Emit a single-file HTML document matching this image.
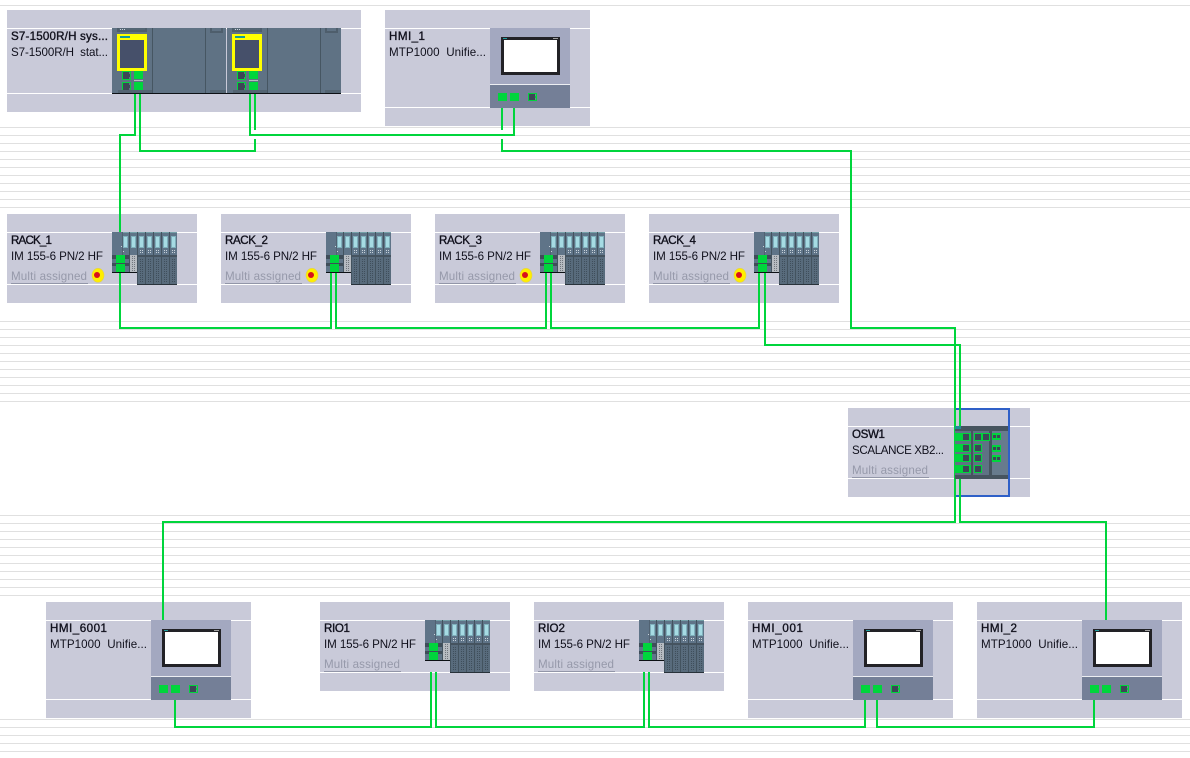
<!DOCTYPE html>
<html>
<head>
<meta charset="utf-8">
<style>
html,body{margin:0;padding:0;background:#fff;width:1190px;height:758px;overflow:hidden}
svg{display:block}
text{font-family:"Liberation Sans",sans-serif;font-size:11.6px;fill:#10101c}
.b{stroke:#10101c;stroke-width:.35px}
.g{fill:#9699aa}
</style>
</head>
<body>
<svg width="1190" height="758" viewBox="0 0 1190 758" xmlns="http://www.w3.org/2000/svg" shape-rendering="crispEdges">
<defs>
<pattern id="dl" width="2" height="2" patternUnits="userSpaceOnUse"><rect width="1" height="1" fill="#70757c"/></pattern>

<g id="rj"><rect x="0" y="0" width="9" height="9" fill="#00d53c"/><rect x="1" y="1" width="7" height="7" fill="#3d4656"/><rect x="7" y="1" width="1" height="2" fill="#5f7284"/><rect x="7" y="6" width="1" height="2" fill="#5f7284"/></g>

<g id="card">
<rect width="8" height="53" fill="#5f7488"/>
<rect x="0" y="0" width="1" height="53" fill="#43535f"/>
<rect x="1" y="0" width="7" height="1" fill="#74a0a8"/>
<rect x="2" y="4" width="5" height="12" fill="#7fb0bc"/>
<rect x="3" y="5" width="3" height="10" fill="#a6dbe4"/>
<rect x="3" y="18" width="1" height="1" fill="#c8d2da"/><rect x="5" y="18" width="1" height="1" fill="#c8d2da"/>
<rect x="3" y="20" width="1" height="1" fill="#c8d2da"/><rect x="5" y="20" width="1" height="1" fill="#c8d2da"/>
<rect x="1" y="23" width="7" height="29" fill="#586b7c"/>
<rect x="1" y="23" width="7" height="2" fill="#45535f"/>
<path d="M3.5 27V50M5.5 27V50" stroke="#3f4e5b" stroke-width="1" stroke-dasharray="1 1" fill="none"/>
<rect y="52" width="8" height="1" fill="#28323a"/>
</g>

<g id="rack">
<rect x="0" y="0" width="25" height="41" fill="#5f7488"/>
<rect x="10" y="0" width="1" height="23" fill="#516272"/>
<rect x="17" y="0" width="1" height="41" fill="#43535f"/>
<rect x="11" y="0" width="6" height="1" fill="#74a0a8"/>
<rect x="11" y="4" width="5" height="12" fill="#7fb0bc"/>
<rect x="12" y="5" width="3" height="10" fill="#a6dbe4"/>
<rect x="11" y="19" width="1" height="1" fill="#c8d2da"/>
<rect x="9" y="14" width="1" height="1" fill="#c8d2da"/>
<rect x="0" y="23" width="17" height="4" fill="#3f4d59"/>
<rect x="0" y="31" width="17" height="3" fill="#3f4d59"/>
<rect x="18" y="0" width="7" height="1" fill="#74a0a8"/>
<rect x="19" y="4" width="5" height="12" fill="#7fb0bc"/>
<rect x="20" y="5" width="3" height="10" fill="#a6dbe4"/>
<rect x="18" y="23" width="7" height="17" fill="#b6bbc1"/>
<rect x="19" y="24" width="5" height="15" fill="url(#dl)"/>
<rect x="0" y="40" width="25" height="1" fill="#0c1014"/>
<use href="#card" x="25"/><use href="#card" x="33"/><use href="#card" x="41"/><use href="#card" x="49"/><use href="#card" x="57"/>
<rect x="4" y="23" width="9" height="8" fill="#00d53c"/>
<rect x="4" y="32" width="9" height="8" fill="#00d53c"/>
</g>

<g id="hmi">
<rect width="80" height="80" fill="#a3a8c0"/>
<rect y="56" width="80" height="1" fill="#eceef2"/>
<rect y="57" width="80" height="23" fill="#747f97"/>
<rect x="11" y="9" width="59" height="38" fill="#222226"/>
<rect x="14" y="12" width="53" height="32" fill="#fff"/>
<rect x="13" y="10" width="4" height="1" fill="#1f9c9c"/>
<rect x="63" y="10" width="5" height="1" fill="#a0a0a0"/>
<rect x="8" y="65" width="9" height="8" fill="#00d53c"/>
<rect x="20" y="65" width="9" height="8" fill="#00d53c"/>
<rect x="38" y="65" width="9" height="8" fill="#00d53c"/>
<rect x="39" y="66" width="6" height="6" fill="#3d4656"/>
<rect x="45" y="66" width="1" height="2" fill="#747f97"/>
<rect x="45" y="70" width="1" height="2" fill="#747f97"/>
</g>

<g id="cpu">
<rect width="114" height="65" fill="#5f7284"/>
<rect x="5" y="0" width="30" height="4" fill="#4e5e6c"/>
<rect x="7" y="0" width="26" height="2" fill="#5f7284" opacity=".4"/>
<rect x="8" y="1" width="1" height="1" fill="#c8d2da"/><rect x="10" y="1" width="1" height="1" fill="#c8d2da"/><rect x="12" y="1" width="1" height="1" fill="#c8d2da"/>
<rect x="40" y="0" width="1" height="65" fill="#465662"/>
<rect x="93" y="0" width="1" height="65" fill="#465662"/>
<rect x="98" y="0" width="13" height="5" fill="#4e5e6c"/>
<rect x="100" y="0" width="9" height="3" fill="#5f7284"/>
<rect x="5" y="6" width="30" height="37" fill="#ffff00"/>
<rect x="8" y="12" width="24" height="28" fill="#46506a"/>
<rect x="8" y="8" width="10" height="2" fill="#129a9a"/>
<use href="#rj" x="10" y="43"/>
<use href="#rj" x="10" y="54"/>
<rect x="22" y="43" width="9" height="8" fill="#00d53c"/>
<rect x="22" y="52" width="9" height="1" fill="#b8bcc2"/>
<rect x="22" y="54" width="9" height="8" fill="#00d53c"/>
<rect x="6" y="62" width="34" height="3" fill="#536472"/>
<rect x="98" y="62" width="16" height="3" fill="#536472"/>
</g>

<g id="warn" shape-rendering="geometricPrecision">
<ellipse cx="1" cy="0.3" rx="6" ry="7" fill="#ffee00" stroke="#e0d050" stroke-width="0.6"/>
<circle cx="0" cy="0" r="3" fill="#d8101c"/>
</g>
</defs>

<!-- grid lines -->
<rect x="0" y="5" width="1190" height="1" fill="#e0e0e0"/>
<g fill="#e0e0e0">
<rect x="0" y="127" width="1190" height="1"/><rect x="0" y="135" width="1190" height="1"/><rect x="0" y="143" width="1190" height="1"/><rect x="0" y="151" width="1190" height="1"/><rect x="0" y="159" width="1190" height="1"/><rect x="0" y="167" width="1190" height="1"/><rect x="0" y="175" width="1190" height="1"/><rect x="0" y="183" width="1190" height="1"/><rect x="0" y="191" width="1190" height="1"/><rect x="0" y="199" width="1190" height="1"/><rect x="0" y="207" width="1190" height="1"/>
<rect x="0" y="321" width="1190" height="1"/><rect x="0" y="329" width="1190" height="1"/><rect x="0" y="337" width="1190" height="1"/><rect x="0" y="345" width="1190" height="1"/><rect x="0" y="353" width="1190" height="1"/><rect x="0" y="361" width="1190" height="1"/><rect x="0" y="369" width="1190" height="1"/><rect x="0" y="377" width="1190" height="1"/><rect x="0" y="385" width="1190" height="1"/><rect x="0" y="393" width="1190" height="1"/><rect x="0" y="401" width="1190" height="1"/>
<rect x="0" y="515" width="1190" height="1"/><rect x="0" y="523" width="1190" height="1"/><rect x="0" y="531" width="1190" height="1"/><rect x="0" y="539" width="1190" height="1"/><rect x="0" y="547" width="1190" height="1"/><rect x="0" y="555" width="1190" height="1"/><rect x="0" y="563" width="1190" height="1"/><rect x="0" y="571" width="1190" height="1"/><rect x="0" y="579" width="1190" height="1"/><rect x="0" y="587" width="1190" height="1"/><rect x="0" y="595" width="1190" height="1"/>
<rect x="0" y="719" width="1190" height="1"/><rect x="0" y="727" width="1190" height="1"/><rect x="0" y="735" width="1190" height="1"/><rect x="0" y="743" width="1190" height="1"/><rect x="0" y="751" width="1190" height="1"/>
</g>

<!-- station boxes -->
<g fill="#c9cad9">
<rect x="7" y="10" width="354" height="102"/>
<rect x="385" y="10" width="205" height="116"/>
<rect x="7" y="214" width="190" height="89"/><rect x="221" y="214" width="190" height="89"/><rect x="435" y="214" width="190" height="89"/><rect x="649" y="214" width="190" height="89"/>
<rect x="848" y="408" width="182" height="89"/>
<rect x="46" y="602" width="205" height="116"/>
<rect x="320" y="602" width="190" height="89"/><rect x="534" y="602" width="190" height="89"/>
<rect x="748" y="602" width="205" height="116"/><rect x="977" y="602" width="205" height="116"/>
</g>
<g fill="#fff">
<rect x="7" y="28" width="354" height="1"/><rect x="7" y="93" width="354" height="1"/>
<rect x="385" y="28" width="205" height="1"/><rect x="385" y="107" width="205" height="1"/>
<rect x="7" y="232" width="190" height="1"/><rect x="7" y="284" width="190" height="1"/>
<rect x="221" y="232" width="190" height="1"/><rect x="221" y="284" width="190" height="1"/>
<rect x="435" y="232" width="190" height="1"/><rect x="435" y="284" width="190" height="1"/>
<rect x="649" y="232" width="190" height="1"/><rect x="649" y="284" width="190" height="1"/>
<rect x="848" y="426" width="182" height="1"/><rect x="848" y="478" width="182" height="1"/>
<rect x="46" y="620" width="205" height="1"/><rect x="46" y="699" width="205" height="1"/>
<rect x="320" y="620" width="190" height="1"/><rect x="320" y="672" width="190" height="1"/>
<rect x="534" y="620" width="190" height="1"/><rect x="534" y="672" width="190" height="1"/>
<rect x="748" y="620" width="205" height="1"/><rect x="748" y="699" width="205" height="1"/>
<rect x="977" y="620" width="205" height="1"/><rect x="977" y="699" width="205" height="1"/>
</g>

<!-- switch frame -->
<rect x="955" y="409" width="54" height="87" fill="none" stroke="#2f60c8" stroke-width="2"/>

<!-- wires -->
<g fill="none" stroke="#00d53c" stroke-width="2">
<path d="M135 94V135H120V328H331V270"/>
<path d="M140 94V151H255V139"/>
<path d="M255 94V130"/>
<path d="M250 94V135H514V108"/>
<path d="M502 108V130"/>
<path d="M502 139V151H851V328H955V522H163V620"/>
<path d="M336 270V328H546V270"/>
<path d="M551 270V328H759V270"/>
<path d="M765 270V345H960V522H1106V620"/>
<path d="M175 700V727H431V672"/>
<path d="M436 672V727H644V672"/>
<path d="M649 672V727H865V700"/>
<path d="M877 700V727H1094V700"/>
</g>

<!-- devices -->
<use href="#cpu" x="112" y="28"/>
<use href="#cpu" x="227" y="28"/>
<rect x="112" y="93" width="229" height="1" fill="#0c1014"/>
<use href="#hmi" x="490" y="28"/>
<use href="#rack" x="112" y="232"/><use href="#rack" x="326" y="232"/><use href="#rack" x="540" y="232"/><use href="#rack" x="754" y="232"/>
<use href="#rack" x="425" y="620"/><use href="#rack" x="639" y="620"/>
<use href="#hmi" x="151" y="620"/><use href="#hmi" x="853" y="620"/><use href="#hmi" x="1082" y="620"/>

<!-- switch body -->
<rect x="955" y="426" width="53" height="53" fill="#5f7284"/>
<rect x="955" y="426" width="53" height="5" fill="#46545f"/>
<rect x="955" y="475" width="53" height="4" fill="#46545f"/>
<rect x="955" y="426" width="6" height="3" fill="#1f8f94"/>
<rect x="971" y="431" width="2" height="44" fill="#46545f"/>
<rect x="989" y="431" width="3" height="44" fill="#46545f"/>
<rect x="992" y="431" width="16" height="44" fill="#677b8d"/>
<g fill="#00d53c">
<rect x="955" y="433" width="16" height="8"/><rect x="955" y="444" width="16" height="8"/><rect x="955" y="454" width="16" height="8"/><rect x="955" y="465" width="16" height="8"/>
<rect x="974" y="433" width="16" height="8"/><rect x="974" y="444" width="8" height="8"/><rect x="974" y="454" width="8" height="8"/><rect x="974" y="465" width="8" height="8"/>
<rect x="992" y="433" width="9" height="7"/><rect x="992" y="445" width="9" height="7"/><rect x="992" y="455" width="9" height="7"/>
</g>
<g fill="#3d4656">
<rect x="963" y="434" width="6" height="6"/><rect x="963" y="445" width="6" height="6"/><rect x="963" y="455" width="6" height="6"/><rect x="963" y="466" width="6" height="6"/>
<rect x="975" y="434" width="6" height="6"/><rect x="983" y="434" width="6" height="6"/><rect x="975" y="445" width="6" height="6"/><rect x="975" y="455" width="6" height="6"/><rect x="975" y="466" width="6" height="6"/>
<rect x="993" y="435" width="3" height="3"/><rect x="997" y="435" width="3" height="3"/><rect x="993" y="447" width="3" height="3"/><rect x="997" y="447" width="3" height="3"/><rect x="993" y="457" width="3" height="3"/><rect x="997" y="457" width="3" height="3"/>
</g>

<!-- warning icons -->
<use href="#warn" x="97" y="275"/><use href="#warn" x="311" y="275"/><use href="#warn" x="525" y="275"/><use href="#warn" x="739" y="275"/>

<!-- underlines -->
<g fill="#9296a8">
<rect x="11" y="283" width="77" height="1"/><rect x="225" y="283" width="77" height="1"/><rect x="439" y="283" width="77" height="1"/><rect x="653" y="283" width="77" height="1"/>
<rect x="852" y="477" width="77" height="1"/>
<rect x="324" y="671" width="77" height="1"/><rect x="538" y="671" width="77" height="1"/>
</g>

<!-- labels -->
<text class="b" x="11" y="40" textLength="97" xml:space="preserve">S7-1500R/H sys...</text>
<text x="11" y="56" textLength="97" xml:space="preserve">S7-1500R/H  stat...</text>
<text class="b" x="389" y="40" textLength="36">HMI_1</text>
<text x="389" y="56" textLength="97" xml:space="preserve">MTP1000  Unifie...</text>

<text class="b" x="11" y="244" textLength="41">RACK_1</text>
<text x="11" y="260" textLength="92">IM 155-6 PN/2 HF</text>
<text class="g" x="11" y="280" textLength="76">Multi assigned</text>
<text class="b" x="225" y="244" textLength="43">RACK_2</text>
<text x="225" y="260" textLength="92">IM 155-6 PN/2 HF</text>
<text class="g" x="225" y="280" textLength="76">Multi assigned</text>
<text class="b" x="439" y="244" textLength="43">RACK_3</text>
<text x="439" y="260" textLength="92">IM 155-6 PN/2 HF</text>
<text class="g" x="439" y="280" textLength="76">Multi assigned</text>
<text class="b" x="653" y="244" textLength="43">RACK_4</text>
<text x="653" y="260" textLength="92">IM 155-6 PN/2 HF</text>
<text class="g" x="653" y="280" textLength="76">Multi assigned</text>

<text class="b" x="852" y="438" textLength="33">OSW1</text>
<text x="852" y="454" textLength="92">SCALANCE XB2...</text>
<text class="g" x="852" y="474" textLength="76">Multi assigned</text>

<text class="b" x="50" y="632" textLength="57">HMI_6001</text>
<text x="50" y="648" textLength="97" xml:space="preserve">MTP1000  Unifie...</text>
<text class="b" x="324" y="632" textLength="26">RIO1</text>
<text x="324" y="648" textLength="92">IM 155-6 PN/2 HF</text>
<text class="g" x="324" y="668" textLength="76">Multi assigned</text>
<text class="b" x="538" y="632" textLength="27">RIO2</text>
<text x="538" y="648" textLength="92">IM 155-6 PN/2 HF</text>
<text class="g" x="538" y="668" textLength="76">Multi assigned</text>
<text class="b" x="752" y="632" textLength="51">HMI_001</text>
<text x="752" y="648" textLength="97" xml:space="preserve">MTP1000  Unifie...</text>
<text class="b" x="981" y="632" textLength="36">HMI_2</text>
<text x="981" y="648" textLength="97" xml:space="preserve">MTP1000  Unifie...</text>
</svg>
</body>
</html>
